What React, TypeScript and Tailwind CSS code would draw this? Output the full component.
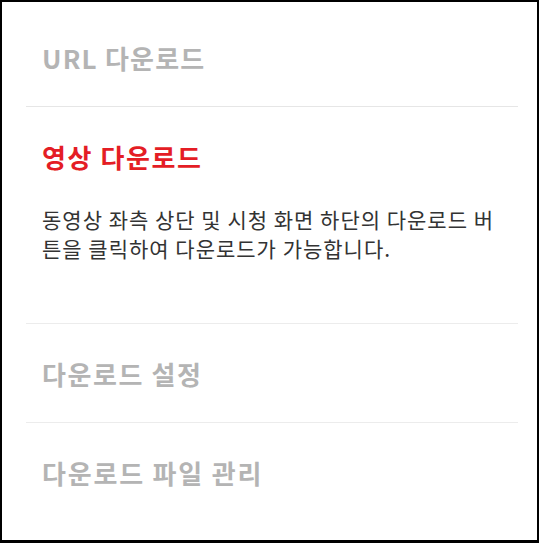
import React from "react";

const font = { fontFamily: '"Noto Sans CJK KR", "Noto Sans", sans-serif' };

export default function App() {
  return (
    <div
      className="w-[539px] h-[543px] bg-white border-2 border-b-[3px] border-black box-border"
      style={font}
    >
      <ul className="ml-6 mr-[19px] pt-[6px]">
        <li className="border-b border-[#e6e6e6] pt-[37px] pb-[35px] pl-4">
          <h3 className="text-[26px] leading-[26px] font-bold tracking-[1.2px] text-[#b4b4b4]">URL 다운로드</h3>
        </li>
        <li className="border-b border-[#ececec] pt-[37px] pb-[60px] pl-4">
          <h3 className="text-[26px] leading-[26px] font-bold tracking-[1.6px] text-[#e41d25]">영상 다운로드</h3>
          <p className="mt-[35px] text-[21px] leading-[29px] tracking-[1px] text-[#333333] pr-4">
            동영상 좌측 상단 및 시청 화면 하단의 다운로드 버튼을 클릭하여 다운로드가 가능합니다.
          </p>
        </li>
        <li className="border-b border-[#ececec] pt-[37px] pb-[35px] pl-4">
          <h3 className="text-[26px] leading-[26px] font-bold tracking-[1.6px] text-[#b4b4b4]">다운로드 설정</h3>
        </li>
        <li className="pt-[37px] pb-[35px] pl-4">
          <h3 className="text-[26px] leading-[26px] font-bold tracking-[1.8px] text-[#b4b4b4]">다운로드 파일 관리</h3>
        </li>
      </ul>
    </div>
  );
}
